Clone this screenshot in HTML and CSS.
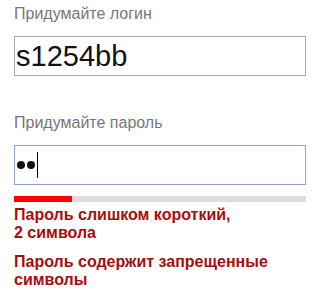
FILE: index.html
```html
<!DOCTYPE html>
<html lang="ru">
<head>
    <meta charset="UTF-8">
    <title>Регистрация</title>
    <link rel="stylesheet" href="styles.css">
</head>
<body>
    <div class="form">
        <div class="field">
            <label class="label">Придумайте логин</label>
            <div class="input">s1254bb</div>
        </div>

        <div class="field">
            <label class="label">Придумайте пароль</label>
            <div class="input focused">
                <span class="dot"></span><span class="dot"></span><span class="caret"></span>
            </div>
            <div class="strength"><div class="strength-fill" style="width:58px"></div></div>
            <div class="error">Пароль слишком короткий,<br/>2 символа</div>
            <div class="error">Пароль содержит запрещенные символы</div>
        </div>
    </div>
</body>
</html>
```

FILE: styles.css
```css
*{
    box-sizing:border-box;
}
body{
    margin:0;
    background:#fff;
    font-family:"Liberation Sans", Arial, sans-serif;
}
    .form{
        width:306px;
        padding:0 0 0 14px;
    }
    .field{
        display:flex;
        flex-direction:column;
    }
    .label{
        color:#777;
        font-size:16px;
        line-height:18px;
        padding-top:5px;
        height:36px;
    }
    .field + .field .label{
        padding-top:38px;
        height:69px;
    }
    .input{
        height:40px;
        border:1px solid #a9a9a9;
        font-size:29px;
        line-height:38px;
        padding-left:1px;
        color:#111;
        display:flex;
        align-items:center;
    }
    .input.focused{
        border-color:#8ea5cf;
        padding-left:2px;
    }
    .dot{
        width:8px;
        height:8px;
        border-radius:50%;
        background:#111;
        margin-right:2px;
    }
    .caret{
        width:1px;
        height:26px;
        background:#000;
    }
    .strength{
        margin-top:11px;
        height:6px;
        background:#ddd;
    }
    .strength-fill{
        height:100%;
        background:#f00;
    }
    .error{
        color:#a80c0c;
        font-weight:bold;
        font-size:16px;
        line-height:18px;
        margin-top:4px;
        width:285px;
    }
    .error + .error{
        margin-top:11px;
    }
```
